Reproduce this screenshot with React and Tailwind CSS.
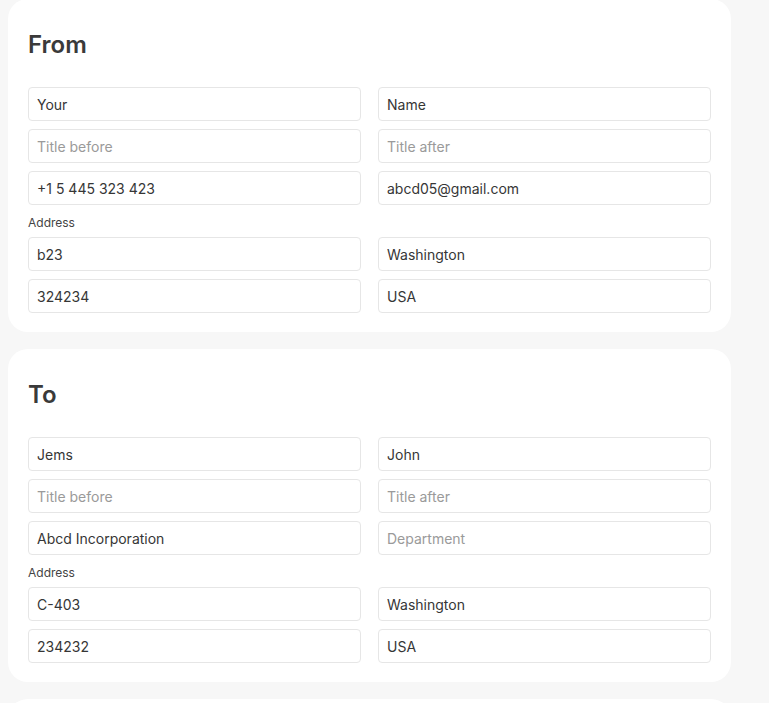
import React from 'react';

const Field = ({ value, placeholder }) => (
  <input
    readOnly
    defaultValue={value}
    placeholder={placeholder}
    className="h-[34px] w-full rounded-[4px] border border-[#e6e6e6] bg-white px-2 text-[14px] text-[#363636] placeholder:text-[#9a9a9a] outline-none"
  />
);

// one card with heading + the grid of inputs
const Section = ({ title, rows, address }) => (
  <div className="w-[723px] rounded-[20px] bg-white px-5 pt-[30px] pb-[19px]">
    <h2 className="text-[24px] leading-8 font-semibold text-[#3a3a3a]">{title}</h2>
    <div className="mt-[26px] grid grid-cols-2 gap-x-[17px] gap-y-2">
      {rows.map((r, i) => (
        <React.Fragment key={i}>
          <Field {...r[0]} />
          <Field {...r[1]} />
        </React.Fragment>
      ))}
    </div>
    <div className="mt-[10px] mb-[6px] text-[12px] leading-4 text-[#444]">Address</div>
    <div className="grid grid-cols-2 gap-x-[17px] gap-y-2">
      {address.map((r, i) => (
        <React.Fragment key={i}>
          <Field value={r[0]} />
          <Field value={r[1]} />
        </React.Fragment>
      ))}
    </div>
  </div>
);

export default function App() {
  return (
    <div className="min-h-[703px] bg-[#f7f7f7] px-2 pb-4 font-['Inter',sans-serif]">
      <div className="flex flex-col gap-[17px]">
        <div className="-mt-px">
          <Section
            title="From"
            rows={[
              [{ value: 'Your' }, { value: 'Name' }],
              [{ placeholder: 'Title before' }, { placeholder: 'Title after' }],
              [{ value: '+1 5 445 323 423' }, { value: 'abcd05@gmail.com' }],
            ]}
            address={[
              ['b23', 'Washington'],
              ['324234', 'USA'],
            ]}
          />
        </div>
        <Section
          title="To"
          rows={[
            [{ value: 'Jems' }, { value: 'John' }],
            [{ placeholder: 'Title before' }, { placeholder: 'Title after' }],
            [{ value: 'Abcd Incorporation' }, { placeholder: 'Department' }],
          ]}
          address={[
            ['C-403', 'Washington'],
            ['234232', 'USA'],
          ]}
        />
        <div className="h-[200px] w-[723px] rounded-[20px] bg-white" />
      </div>
    </div>
  );
}
